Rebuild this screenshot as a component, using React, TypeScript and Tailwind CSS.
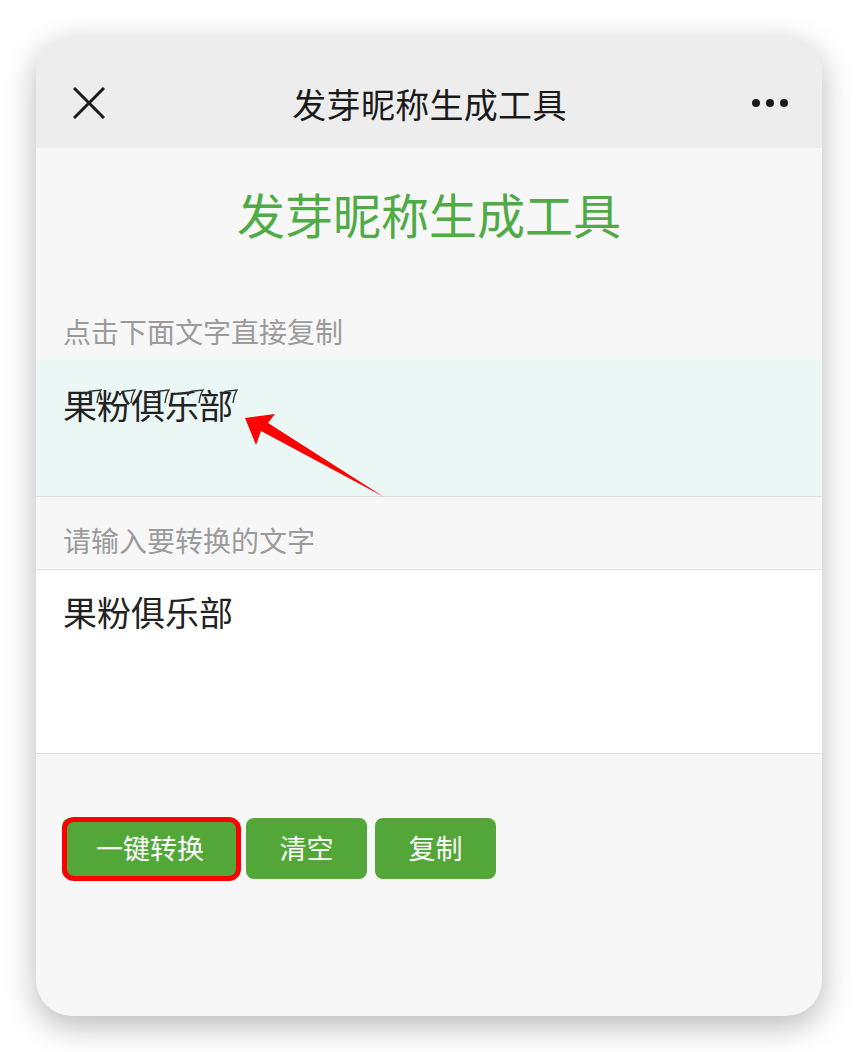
const font = { fontFamily: '"Noto Sans CJK SC", "Noto Sans", sans-serif' };

// little curl drawn over each glyph, like the combining mark the generator adds
const Sprout = ({ ch }: { ch: string }) => (
  <span className="relative inline-block">
    {ch}
    <svg className="absolute left-[20px] top-[8px]" width="19" height="15" viewBox="0 0 19 15">
      <path d="M1 3 L3 6 Q5 2 9 2 L18 1 Q15 6 14 14" fill="none" stroke="#333" strokeWidth="1.4" />
    </svg>
  </span>
);

const App = () => {
  const sprout = ['果', '粉', '俱', '乐', '部'];

  return (
    <div className="relative w-[858px] h-[1052px] bg-white pt-[36px] pl-[36px]" style={font}>
      {/* Phone frame */}
      <div className="w-[786px] h-[980px] rounded-[36px] overflow-hidden bg-[#f7f7f7] shadow-[0_10px_32px_rgba(0,0,0,0.28)] flex flex-col">
        {/* Top bar */}
        <div className="h-[112px] bg-[#ededed] flex items-center justify-between pl-[37px] pr-[34px] pt-[22px]">
          <svg width="32" height="32" viewBox="0 0 32 32">
            <path d="M1 1 L31 31 M31 1 L1 31" stroke="#1a1a1a" strokeWidth="3" />
          </svg>
          <div className="text-[34px] text-[#1a1a1a] tracking-[0.3px] ml-[2px]">发芽昵称生成工具</div>
          <div className="flex items-center gap-[6px]">
            <span className="w-[8px] h-[8px] rounded-full bg-[#1a1a1a]" />
            <span className="w-[8px] h-[8px] rounded-full bg-[#1a1a1a]" />
            <span className="w-[8px] h-[8px] rounded-full bg-[#1a1a1a]" />
          </div>
        </div>

        {/* Page title */}
        <div className="pt-[37px] h-[93px] text-center text-[48px] leading-[56px] text-[#50aa46]">发芽昵称生成工具</div>

        {/* Result */}
        <div className="pt-[70px] pb-[9px] px-[27px] text-[28px] leading-[40px] text-[#9b9b9b]">点击下面文字直接复制</div>
        <div className="h-[137px] bg-[#ebf7f5] border-b border-[#dcdfe0] px-[27px] pt-[21px] text-[34px] leading-[48px] text-[#222]">
          {sprout.map((ch, i) => (
            <Sprout key={i} ch={ch} />
          ))}
        </div>

        {/* Input */}
        <div className="pt-[23px] pb-[9px] px-[27px] text-[28px] leading-[40px] text-[#9b9b9b]">请输入要转换的文字</div>
        <div className="h-[185px] bg-white border-y border-[#e2e2e2] px-[27px] pt-[18px] text-[34px] leading-[48px] text-[#222]">
          果粉俱乐部
        </div>

        {/* Buttons */}
        <div className="flex gap-[8px] pt-[64px] pl-[26px]">
          <button className="relative w-[176px] h-[61px] rounded-[8px] bg-[#52a738] text-white text-[27px]">
            一键转换
            <span className="absolute left-0 -top-[1px] w-[179px] h-[64px] rounded-[12px] border-[5px] border-[#ff0000]" />
          </button>
          <button className="w-[121px] h-[61px] rounded-[8px] bg-[#52a738] text-white text-[27px]">清空</button>
          <button className="w-[121px] h-[61px] rounded-[8px] bg-[#52a738] text-white text-[27px]">复制</button>
        </div>
      </div>

      {/* Annotation arrow */}
      <svg className="absolute left-0 top-0 pointer-events-none" width="858" height="1052">
        <polygon points="245,418 275,414 268,423 384,497 261,431 256,445" fill="#ff0000" />
      </svg>
    </div>
  );
};

export default App;
